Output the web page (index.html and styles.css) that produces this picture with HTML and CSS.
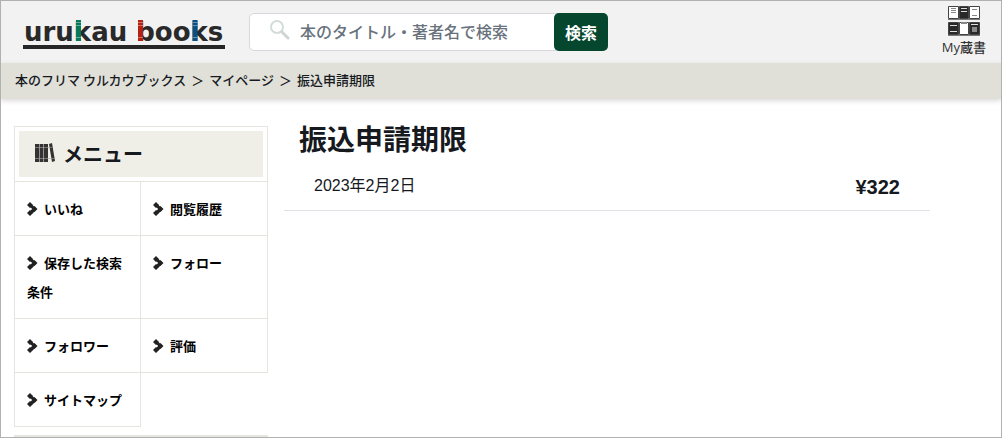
FILE: index.html
```html
<!DOCTYPE html>
<html lang="ja">
<head>
  <meta charset="UTF-8">
  <meta name="viewport" content="width=device-width, initial-scale=1.0">
  <title>振込申請期限 | urukau books</title>
  <link rel="stylesheet" href="styles.css">
</head>
<body>
  <!-- shared icons -->
  <svg class="sprite" aria-hidden="true">
    <symbol id="arrow" viewBox="0 0 11 14">
      <path d="M3 0L6 3L3 6L0 3zM7.500 4L10.500 7L7.500 10L4.500 7zM3 8L6 11L3 14L0 11z"/>
      <path d="M5 2.500L8.500 6L6 7.500L3 5zM6 6.500L8.500 8.500L5.500 11.500L3 9z"/>
    </symbol>
  </svg>
  <header class="header">
    <a class="logo" href="#" aria-label="urukau books">
      <svg width="204" height="34" viewBox="0 0 204 34">
        <text class="logo-text" x="2" y="24">urukau books</text>
        <path fill="#087a5c" d="M54 3h5v21h-5z"/>
        <path fill="#b92014" d="M116 3h5v21h-5z"/>
        <path fill="#0b4d85" d="M170.500 3h5v21h-5z"/>
        <path stroke="#f2f2f2" stroke-opacity="0.4" d="M54 5.500h5M54 8.500h5M54 20.500h5M116 5.500h5M116 8.500h5M116 20.500h5M170.500 5.500h5M170.500 8.500h5M170.500 20.500h5"/>
        <path fill="#262626" d="M1 28h202v4H1z"/>
      </svg>
    </a>
    <form class="search">
      <svg class="search-icon" width="22" height="22" viewBox="0 0 22 22" fill="none">
        <circle cx="8" cy="8" r="6" stroke="#d2dcda" stroke-width="2"/>
        <path d="M13 13L19 19" stroke="#d0d5d3" stroke-width="3" stroke-linecap="round"/>
      </svg>
      <input type="text" class="search-input" aria-label="検索" placeholder="本のタイトル・著者名で検索">
      <button type="submit" class="search-btn">検索</button>
    </form>
    <a class="mybooks" href="#">
      <svg width="34" height="32" viewBox="0 0 34 32">
        <g stroke="#444">
          <path fill="#fff" d="M1.500 1.500h10v12h-10zM22.500 1.500h10v12h-10zM12.500 17.500h9v12h-9z"/>
          <path fill="#292929" d="M12.500 1.500h9v12h-9zM1.500 17.500h10v12h-10zM22.500 17.500h10v12h-10z"/>
        </g>
        <path stroke="#888" d="M4 3.500h5M4 5.500h5M4 7.500h5M25 4.500h5M25 10.500h5"/>
        <path stroke="#ddd" d="M14 3.500h6M14 6.500h6M3 20.500h7M3 26.500h7M24 19.500h7"/>
        <path fill="#888" d="M25 22h5v5h-5zM14 17h6v2h-6z"/>
        <path stroke="#777" d="M1 14.500h32M1 30.500h32"/>
      </svg>
      <span>My蔵書</span>
    </a>
  </header>
  <nav class="breadcrumb" aria-label="パンくず">
    <a href="#">本のフリマ ウルカウブックス</a>
    <span>＞</span>
    <a href="#">マイページ</a>
    <span>＞</span>
    <span>振込申請期限</span>
  </nav>
  <div class="container">
    <aside class="sidebar">
      <div class="menu-head">
        <h2 class="menu-title">
          <svg width="22" height="20" viewBox="0 0 22 20">
            <path fill="#333" d="M1 1h4v18H1zM5.500 1h4v18h-4zM10 1h4v18h-4zM15 1l3-1 3 18-3 1z"/>
            <path stroke="#aaa9a3" stroke-opacity="0.6" d="M1 4.500h17M1 15.500h19"/>
          </svg>
          メニュー
        </h2>
      </div>
      <ul class="menu">
        <li><a href="#"><svg class="arrow"><use href="#arrow"/></svg>いいね</a></li>
        <li><a href="#"><svg class="arrow"><use href="#arrow"/></svg>閲覧履歴</a></li>
        <li><a href="#"><svg class="arrow"><use href="#arrow"/></svg>保存した検索条件</a></li>
        <li><a href="#"><svg class="arrow"><use href="#arrow"/></svg>フォロー</a></li>
        <li><a href="#"><svg class="arrow"><use href="#arrow"/></svg>フォロワー</a></li>
        <li><a href="#"><svg class="arrow"><use href="#arrow"/></svg>評価</a></li>
        <li><a href="#"><svg class="arrow"><use href="#arrow"/></svg>サイトマップ</a></li>
      </ul>
      <div class="side-box"></div>
    </aside>
    <main class="main">
      <h1>振込申請期限</h1>
      <div class="deadline">
        <span>2023年2月2日</span>
        <strong>¥322</strong>
      </div>
    </main>
  </div>
</body>
</html>
```
FILE: styles.css
```css
* {
  box-sizing: border-box;
}
body {
  margin: 0;
  min-height: 100vh;
  border: 1px solid #b1b1b4;
  background: #fff;
  color: #16191e;
  font-family: "Liberation Sans", "Noto Sans CJK JP", sans-serif;
  font-size: 16px;
}
a {
  color: inherit;
  text-decoration: none;
}
svg {
  flex-shrink: 0;
}
.sprite {
  display: none;
}

/* header */
.header {
  display: flex;
  align-items: center;
  height: 62px;
  padding: 0 15px 0 21px;
  background: #f2f2f2;
}
.logo {
  display: flex;
  margin-right: 23px;
  padding-top: 4px;
}
.logo-text {
  font: bold 26px "DejaVu Sans", sans-serif;
  fill: #292929;
}
.search {
  display: flex;
  align-items: center;
  width: 359px;
  height: 38px;
  border: 1px solid #d5d8df;
  border-radius: 5px;
  background: #fff;
}
.search-icon {
  margin: 0 9px 4px 19px;
}
.search-input {
  flex: 1;
  min-width: 0;
  border: 0;
  padding: 0 0 2px;
  background: none;
  font: 500 16px "Noto Sans CJK JP", sans-serif;
}
.search-input::placeholder {
  color: #68727c;
  opacity: 1;
}
.search-btn {
  width: 54px;
  height: 38px;
  margin-right: -1px;
  padding: 0;
  border: 0;
  border-radius: 5px;
  background: #05472e;
  color: #fff;
  font: bold 16px "Noto Sans CJK JP", sans-serif;
}
.mybooks {
  display: flex;
  flex-direction: column;
  align-items: center;
  margin: 0 0 2px auto;
  color: #333;
  font: 500 13px/20px "Open Sans", "Noto Sans CJK JP", sans-serif;
}

/* breadcrumb */
.breadcrumb {
  display: flex;
  gap: 5px;
  height: 36px;
  padding: 0 14px;
  background: #e0e0d8;
  box-shadow: 0 2px 5px rgba(0, 0, 0, 0.15);
  font: 500 13px/34px "Noto Sans CJK JP", sans-serif;
}

/* layout */
.container {
  display: flex;
  align-items: flex-start;
  gap: 16px;
  padding: 27px 71px 0 13px;
}
.sidebar {
  width: 254px;
  flex-shrink: 0;
}
.menu-head {
  padding: 4px;
  border: 1px solid #e5e5df;
  border-bottom: 0;
}
.menu-title {
  display: flex;
  align-items: center;
  gap: 7px;
  height: 46px;
  margin: 0;
  padding: 0 15px 2px;
  background: #efefe7;
  font: bold 20px "Noto Sans CJK JP", sans-serif;
}
.menu {
  display: grid;
  grid-template-columns: 127px 1fr;
  margin: 0 0 8px;
  padding: 0;
  list-style: none;
}
.menu li {
  padding: 12px;
  border: 1px solid #e5e5df;
  border-top-width: 0;
  color: #000;
  font: bold 13px/29px "Noto Sans CJK JP", sans-serif;
}
.menu li:nth-child(even) {
  border-left: 0;
}
.menu li:nth-child(-n+2) {
  border-top-width: 1px;
}
.arrow {
  width: 11px;
  height: 14px;
  margin-right: 6px;
  vertical-align: -2px;
  fill: #222;
}
.side-box {
  border-top: 2px solid #e5e5df;
}

/* main */
.main {
  flex: 1;
}
.main h1 {
  margin: 0;
  padding-left: 15px;
  font: bold 28px/24px "Noto Sans CJK JP", sans-serif;
}
.deadline {
  display: flex;
  justify-content: space-between;
  align-items: center;
  padding: 22px 30px 10px;
  border-bottom: 1px solid #dee2e6;
  line-height: 26px;
}
.deadline strong {
  padding-top: 2px;
  font-size: 20px;
}
```
